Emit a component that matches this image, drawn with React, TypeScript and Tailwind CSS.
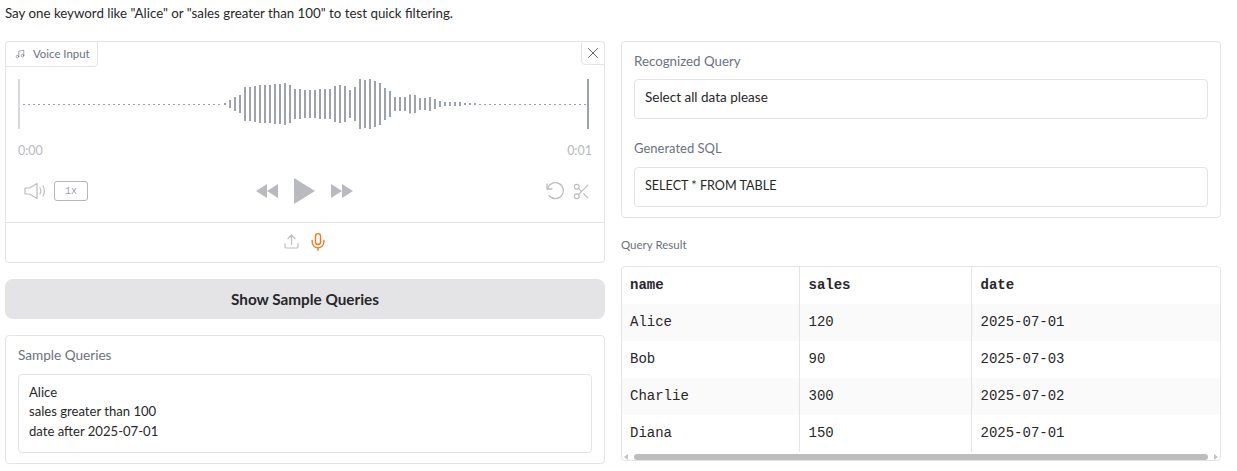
import React from "react";
import { Music, X, Mic, Scissors } from "lucide-react";

const heights = [2,8,14,18,34,34,36,38,38,38,40,40,42,38,30,30,28,28,28,30,30,30,36,38,36,28,34,50,48,50,46,42,32,26,14,14,14,19,18,12,12,14,10,6,4,4,4,4,2,2,2];
const sans = "font-['Lato','Liberation_Sans',sans-serif]";
const mono = "font-['Liberation_Mono','DejaVu_Sans_Mono',monospace]";
const rows = [
  ["Alice", "120", "2025-07-01"],
  ["Bob", "90", "2025-07-03"],
  ["Charlie", "300", "2025-07-02"],
  ["Diana", "150", "2025-07-01"],
];

function Wave() {
  const left: number[] = [];
  for (let x = 23; x < 222; x += 5) left.push(x);
  const right: number[] = [];
  for (let x = 479; x < 586; x += 5) right.push(x);
  return (
    <svg width="574" height="52" viewBox="18 78 574 52" className="block">
      <rect x="18" y="79" width="2" height="50" fill="#d9d5ea" />
      <rect x="587" y="79" width="2" height="50" fill="#9ca3af" />
      {left.concat(right).map((x) => <rect key={x} x={x} y="104" width="2" height="1" fill="#9ca3af" />)}
      {heights.map((h, i) => <rect key={i} x={224 + i * 5} y={104 - h / 2} width="2" height={h} fill="#9ca3af" />)}
    </svg>
  );
}

function Volume() {
  return (
    <svg width="22" height="18" viewBox="0 0 22 18" fill="none" stroke="#bdbdc3" strokeWidth="1.2">
      <path d="M1 6h4.5L13 1.5v15L5.500 12H1z" strokeLinejoin="round" />
      <path d="M16 6c1 1.800 1 4.200 0 6M19 4c1.700 3 1.700 7 0 10" strokeLinecap="round" />
    </svg>
  );
}
function Rewind() {
  return <svg width="22" height="14" viewBox="0 0 22 14" fill="#b9b9c0"><path d="M0 7l11-7v14zM11 7l11-7v14z" /></svg>;
}
function Forward() {
  return <svg width="22" height="14" viewBox="0 0 22 14" fill="#b9b9c0"><path d="M0 0l11 7-11 7zM11 0l11 7-11 7z" /></svg>;
}
function Play() {
  return <svg width="21" height="26" viewBox="0 0 21 26" fill="#b9b9c0"><path d="M0 0l21 13L0 26z" /></svg>;
}
function Undo() {
  return (
    <svg width="19" height="18" viewBox="0 0 19 18" fill="none" stroke="#bdbdc3" strokeWidth="1.300" strokeLinecap="round" strokeLinejoin="round">
      <path d="M1 2v5h5" />
      <path d="M1.500 7A8 8 0 1 1 3 13.500" />
    </svg>
  );
}
function Upload() {
  return (
    <svg width="15" height="15" viewBox="0 0 15 15" fill="none" stroke="#bdbdc3" strokeWidth="1.200" strokeLinecap="round" strokeLinejoin="round">
      <path d="M1 9.500V13a1 1 0 0 0 1 1h11a1 1 0 0 0 1-1V9.500" />
      <path d="M7.500 10.500V1M4 4.500L7.500 1 11 4.500" />
    </svg>
  );
}

export default function App() {
  return (
    <div className={`h-[471px] w-[1237px] overflow-hidden bg-white pl-[5px] pr-4 pt-[4px] text-[#27272a] ${sans}`}>
      <p className="h-[37px] text-[13.3px] leading-[18px]">Say one keyword like "Alice" or "sales greater than 100" to test quick filtering.</p>
      <div className="flex gap-4">
        <div className="flex w-[600px] flex-col">
          <div className="relative h-[222px] rounded-[4px] border border-[#e4e4e7]">
            <div className="absolute -left-px -top-px flex h-[26px] w-[93px] items-center gap-[8px] rounded-br-[4px] rounded-tl-[4px] border border-[#e4e4e7] bg-white pl-[9px] text-[11.4px] text-[#6b7280]">
              <Music size={10} strokeWidth={1.5} />
              <span>Voice Input</span>
            </div>
            <button className="absolute -right-px -top-px flex h-[24px] w-[24px] items-center justify-center rounded-bl-[4px] rounded-tr-[4px] border border-[#e4e4e7] bg-white text-[#52525b]">
              <X size={18} strokeWidth={1.2} />
            </button>
            <div className="pl-3 pt-[36px]">
              <Wave />
            </div>
            <div className="mt-[12px] flex justify-between px-3 text-[12.5px] leading-[18px] text-[#b9b9c0]">
              <span>0:00</span>
              <span>0:01</span>
            </div>
            <div className="mt-[18px] flex h-[26px] items-center justify-between pl-[18px] pr-[13px]">
              <div className="flex w-[230px] items-center gap-[8px]">
                <Volume />
                <span className={`flex h-[20px] w-[34px] items-center justify-center rounded-[3px] border border-[#b5b5bb] text-[10px] text-[#9ca3af] ${mono}`}>1x</span>
              </div>
              <div className="mr-[6px] flex items-center gap-4">
                <Rewind />
                <Play />
                <Forward />
              </div>
              <div className="flex w-[230px] items-center justify-end gap-[7px] text-[#bdbdc3]">
                <Undo />
                <Scissors size={19} strokeWidth={1.5} />
              </div>
            </div>
            <div className="mt-[18px] flex h-[40px] items-center justify-center gap-[9px] border-t border-[#e4e4e7] pb-[2px] pl-[2px]">
              <Upload />
              <Mic size={20} strokeWidth={1.6} className="text-[#f97316]" />
            </div>
          </div>
          <button className="mt-4 h-[40px] rounded-[8px] bg-[#e4e4e7] text-[15.3px] font-bold text-[#27272a]">Show Sample Queries</button>
          <div className="mt-4 h-[129px] rounded-[4px] border border-[#e4e4e7] px-3 pt-[10px]">
            <div className="h-[19px] text-[13.6px] leading-[19px] text-[#6b7280]">Sample Queries</div>
            <div className="mt-[9px] h-[79px] rounded-[4px] border border-[#e4e4e7] px-[10px] py-[8px] text-[13.1px] leading-[19.400px]">
              <div>Alice</div>
              <div>sales greater than 100</div>
              <div>date after 2025-07-01</div>
            </div>
          </div>
        </div>
        <div className="flex w-[600px] flex-col">
          <div className="h-[177px] rounded-[4px] border border-[#e4e4e7] px-3 pt-[10px]">
            <div className="h-[19px] text-[13.3px] leading-[19px] text-[#6b7280]">Recognized Query</div>
            <div className="mt-[8px] flex h-[40px] items-center rounded-[4px] border border-[#e4e4e7] px-[10px] pb-[4px] text-[13.5px]">Select all data please</div>
            <div className="mt-[20px] h-[19px] text-[13px] leading-[19px] text-[#6b7280]">Generated SQL</div>
            <div className="mt-[9px] flex h-[40px] items-center rounded-[4px] border border-[#e4e4e7] px-[10px] pb-[2px] text-[12.6px]">SELECT * FROM TABLE</div>
          </div>
          <div className="mt-[19px] h-[16px] text-[11.5px] leading-[16px] text-[#6b7280]">Query Result</div>
          <div className={`mt-[13px] h-[195px] overflow-hidden rounded-[4px] border border-[#e4e4e7] ${mono} text-[14px]`}>
            <table className="w-full table-fixed border-collapse">
              <colgroup>
                <col className="w-[177px]" />
                <col className="w-[172px]" />
                <col />
              </colgroup>
              <thead>
                <tr className="h-[37px] font-bold">
                  <th className="border-r border-[#e4e4e7] pl-[8px] text-left">name</th>
                  <th className="border-r border-[#e4e4e7] pl-[9px] text-left">sales</th>
                  <th className="pl-[9px] text-left">date</th>
                </tr>
              </thead>
              <tbody>
                {rows.map((r, i) => (
                  <tr key={r[0]} className={`h-[37px] ${i % 2 === 0 ? "bg-[#fafafa]" : "bg-white"}`}>
                    <td className="border-r border-[#e4e4e7] pl-[8px]">{r[0]}</td>
                    <td className="border-r border-[#e4e4e7] pl-[9px]">{r[1]}</td>
                    <td className="pl-[9px]">{r[2]}</td>
                  </tr>
                ))}
              </tbody>
            </table>
            <div className="flex h-[9px] items-center gap-[4px] px-[2px]">
              <span className="h-0 w-0 border-y-[3px] border-r-[4px] border-y-transparent border-r-[#c4c4c4]" />
              <span className="mx-[2px] h-[6px] flex-1 rounded-full bg-[#bdbdbd]" />
              <span className="h-0 w-0 border-y-[3px] border-l-[4px] border-y-transparent border-l-[#c4c4c4]" />
            </div>
          </div>
        </div>
      </div>
    </div>
  );
}
